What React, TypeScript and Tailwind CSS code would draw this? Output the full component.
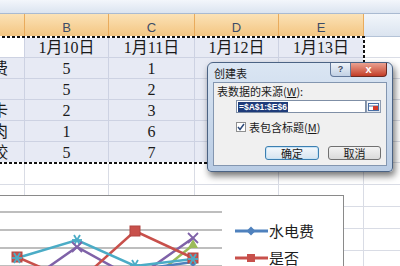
import React from "react";

const W = ["w-[25px]", "w-[84px]", "w-[86px]", "w-[84px]", "w-[85px]"];

// D/E values of rows 2-6 sit under the dialog
const data = [
  ["", "1月10日", "1月11日", "1月12日", "1月13日"],
  ["水电费", "5", "1", "", ""],
  ["是否", "5", "2", "", ""],
  ["公交卡", "2", "3", "", ""],
  ["买牛肉", "1", "6", "", ""],
  ["吃水饺", "5", "7", "", ""],
];

const cellFont = { fontFamily: '"Liberation Serif", "Noto Sans CJK SC", serif' };
const uiFont = { fontFamily: '"Noto Sans CJK SC", "Liberation Sans", sans-serif' };

function DataRow({ row, r }: { row: string[]; r: number }) {
  return (
    <div className="flex h-[21px]" style={cellFont}>
      {row.map((t, i) => (
        <div
          key={i}
          className={`${W[i]} shrink-0 h-full border-r border-b border-[#cdd2e2] flex items-end pb-[1px] overflow-hidden text-[16px] leading-none text-[#1b1b1b] ${
            i === 0 ? "justify-start" : "justify-center"
          } ${i === 0 && r === 0 ? "bg-white" : "bg-[#e7eaf4]"}`}
        >
          {i === 0 ? <span className="ml-[-40px] whitespace-nowrap">{t}</span> : t}
        </div>
      ))}
      <div className="flex-1 h-full bg-white border-b border-[#dadde6]" />
    </div>
  );
}

function EmptyRow() {
  return (
    <div className="flex h-[22px]">
      {W.map((w, i) => (
        <div key={i} className={`${w} shrink-0 h-full bg-white border-r border-b border-[#d9dce5]`} />
      ))}
      <div className="flex-1 h-full bg-white border-b border-[#d9dce5]" />
    </div>
  );
}

function Chart() {
  const star = (x: number, y: number) => (
    <g stroke="#4bacc6" strokeWidth="1.8">
      <line x1={x - 5} y1={y} x2={x + 5} y2={y} />
      <line x1={x - 3} y1={y - 5} x2={x + 3} y2={y + 5} />
      <line x1={x + 3} y1={y - 5} x2={x - 3} y2={y + 5} />
    </g>
  );
  const cross = (x: number, y: number) => (
    <g stroke="#7f62a8" strokeWidth="1.8">
      <line x1={x - 5} y1={y - 5} x2={x + 5} y2={y + 5} />
      <line x1={x + 5} y1={y - 5} x2={x - 5} y2={y + 5} />
    </g>
  );
  const sq = (x: number, y: number) => (
    <rect x={x - 5} y={y - 5} width="10" height="10" fill="#c8504b" stroke="#b24440" />
  );
  return (
    <div className="absolute left-[-12px] top-[195px] w-[356px] h-[90px] bg-white border border-[#8a8a8a] flex">
      <svg width="234" height="88" viewBox="0 196 234 88" className="ml-[11px] shrink-0">
        {[212, 230, 248, 266].map((y) => (
          <line key={y} x1="0" y1={y} x2="222" y2={y} stroke="#a8a8a8" strokeWidth="1.3" />
        ))}
        <polyline points="135,292 193,245" fill="none" stroke="#9bbb59" strokeWidth="2.5" />
        <path d="M193 239 L198 248 L188 248 Z" fill="#9bbb59" />
        <polyline points="135,270 193,262" fill="none" stroke="#4f81bd" strokeWidth="2.5" />
        <path d="M193 257 L198 262 L193 267 L188 262 Z" fill="#4f81bd" />
        <polyline points="17,289 77,247 135,279 193,238" fill="none" stroke="#7f62a8" strokeWidth="2.5" />
        <polyline points="17,257 77,283 135,231 193,258" fill="none" stroke="#c8504b" strokeWidth="2.5" />
        <polyline points="17,258 77,240 135,266 193,259" fill="none" stroke="#4bacc6" strokeWidth="2.5" />
        {sq(17, 257)}
        {sq(135, 231)}
        {sq(193, 258)}
        {star(17, 258)}
        {star(77, 240)}
        {star(135, 265)}
        {star(193, 259)}
        {cross(77, 247)}
        {cross(193, 238)}
      </svg>
      <div className="flex flex-col gap-[10px] pt-[26px] pl-[1px]" style={uiFont}>
        <div className="flex items-center h-[17px]">
          <svg width="33" height="10" viewBox="0 0 33 10">
            <line x1="0" y1="5" x2="33" y2="5" stroke="#4f81bd" strokeWidth="3" />
            <path d="M16 0.5 L20.5 5 L16 9.5 L11.5 5 Z" fill="#4f81bd" />
          </svg>
          <span className="ml-[1px] text-[15px] leading-none text-[#1e1e1e]">水电费</span>
        </div>
        <div className="flex items-center h-[17px]">
          <svg width="33" height="10" viewBox="0 0 33 10">
            <line x1="0" y1="5" x2="33" y2="5" stroke="#c8504b" strokeWidth="3" />
            <rect x="12" y="1" width="8" height="8" fill="#c8504b" />
          </svg>
          <span className="ml-[1px] text-[15px] leading-none text-[#1e1e1e]">是否</span>
        </div>
      </div>
    </div>
  );
}

function Dialog() {
  return (
    <div
      className="absolute left-[207px] top-[62px] w-[186px] h-[110px] rounded-t-[6px] rounded-b-[4px] border border-[#4b6384] bg-linear-to-b from-[#dbe6f3] to-[#b9cce4] shadow-[2px_4px_7px_rgba(0,0,0,0.55)] px-[5px] pb-[5px] flex flex-col"
      style={uiFont}
    >
      <div className="h-[19px] flex items-start justify-between">
        <span className="text-[11px] leading-none pt-[5px] pl-[1px] text-[#1a1a1a]">创建表</span>
        <div className="flex">
          <div className="w-[21px] h-[14px] rounded-bl-[4px] border border-t-0 border-[#62789a] bg-linear-to-b from-[#eef3f9] to-[#c2d1e4] flex items-center justify-center text-[9px] font-bold text-[#3b4a60]" style={{ fontFamily: '"Liberation Sans", sans-serif' }}>
            ?
          </div>
          <div className="w-[36px] h-[14px] rounded-br-[4px] border border-t-0 border-l-0 border-[#6b2a22] bg-linear-to-b from-[#e9a191] to-[#c23b25] flex items-center justify-center text-[11px] font-bold text-white" style={{ fontFamily: '"Liberation Sans", sans-serif' }}>
            x
          </div>
        </div>
      </div>
      <div className="flex-1 bg-[#f0f0f0] border border-[#8396b0] flex flex-col text-[11px] leading-none text-[#1a1a1a]">
        <div className="pt-[3px] pl-[3px] h-[14px]">
          表数据的来源(<span className="underline">W</span>):
        </div>
        <div className="mt-[3px] ml-[22px] flex h-[13px]">
          <div className="w-[130px] h-full bg-white border border-[#7f8fa6] flex items-center px-[1px]">
            <span className="bg-[#1f3c7a] text-white text-[8.5px] leading-[10px] px-[1px] font-bold" style={{ fontFamily: '"Liberation Sans", sans-serif' }}>
              =$A$1:$E$6
            </span>
          </div>
          <div className="w-[15px] h-full border border-[#8d9bb0] bg-linear-to-b from-[#f6f8fb] to-[#dde4ee] flex items-center justify-center">
            <svg width="11" height="8" viewBox="0 0 11 8">
              <rect x="0.5" y="0.5" width="10" height="7" fill="#fff" stroke="#4a6fa5" />
              <line x1="0.5" y1="3" x2="10.5" y2="3" stroke="#4a6fa5" />
              <rect x="5" y="3" width="5" height="4" fill="#d43a2a" />
            </svg>
          </div>
        </div>
        <div className="mt-[8px] ml-[22px] flex items-center h-[12px]">
          <div className="w-[10px] h-[10px] bg-white border border-[#8e8f8f] flex items-center justify-center">
            <svg width="8" height="8" viewBox="0 0 8 8">
              <path d="M1 4 L3 6.5 L7 1" fill="none" stroke="#2d4a7a" strokeWidth="1.5" />
            </svg>
          </div>
          <span className="ml-[3px]">
            表包含标题(<span className="underline">M</span>)
          </span>
        </div>
        <div className="mt-[13px] flex justify-end gap-[9px] pr-[5px]">
          <div className="w-[54px] h-[14px] rounded-[3px] border border-[#3c7fb1] bg-linear-to-b from-[#f4f8fc] to-[#d6e4f0] shadow-[inset_0_0_0_1px_#c7e3f6] flex items-center justify-center">
            确定
          </div>
          <div className="w-[53px] h-[14px] rounded-[3px] border border-[#707070] bg-linear-to-b from-[#f3f3f3] to-[#dadada] flex items-center justify-center">
            取消
          </div>
        </div>
      </div>
    </div>
  );
}

export default function App() {
  return (
    <div className="relative w-[400px] h-[266px] overflow-hidden bg-white">
      <div className="h-[14px] bg-linear-to-b from-[#f3f6fb] to-[#dbe4f0] border-b border-[#a9bad1]" />
      <div className="flex h-[23px]" style={{ fontFamily: '"Liberation Sans", sans-serif' }}>
        {["", "B", "C", "D", "E"].map((t, i) => (
          <div
            key={i}
            className={`${W[i]} shrink-0 h-full border-r border-[#e9ab5c] bg-linear-to-b from-[#fbe2b6] to-[#f3c47f] flex items-end justify-center pb-[3px] text-[13px] leading-none text-[#3d4b66]`}
          >
            {t}
          </div>
        ))}
        <div className="flex-1 h-full bg-linear-to-b from-[#f2f6fb] to-[#dbe4f0] border-b border-[#b4c3d7]" />
      </div>
      {data.map((row, r) => (
        <DataRow key={r} row={row} r={r} />
      ))}
      {[0, 1, 2, 3, 4].map((k) => (
        <EmptyRow key={k} />
      ))}

      <svg className="absolute left-[-4px] top-[36px]" width="369" height="129">
        <rect x="1" y="1" width="367" height="126" fill="none" stroke="#fff" strokeWidth="2" />
        <rect x="1" y="1" width="367" height="126" fill="none" stroke="#111" strokeWidth="2" strokeDasharray="3 2" />
      </svg>

      <Chart />
      <Dialog />
    </div>
  );
}
